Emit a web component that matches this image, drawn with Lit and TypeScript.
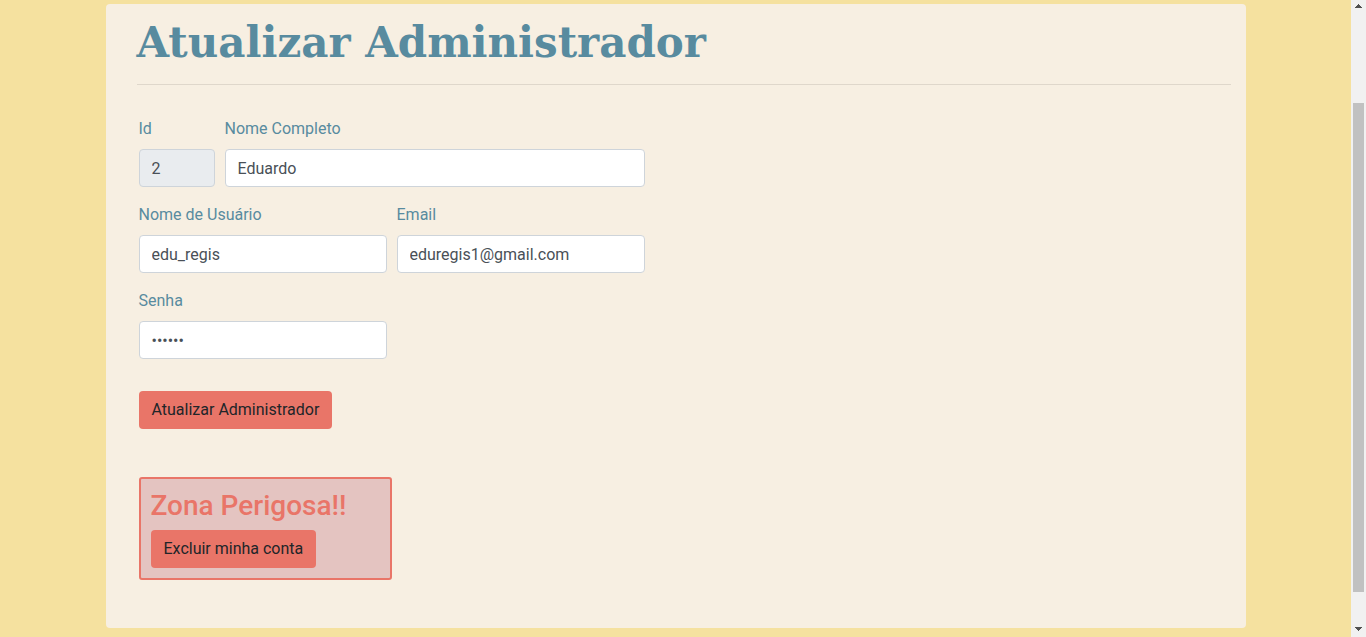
import { LitElement, html, css } from "lit";
import { customElement, state } from "lit/decorators.js";

@customElement("page-scrollbar")
class PageScrollbar extends LitElement {
  static styles = css`
    :host {
      display: flex;
      flex-direction: column;
      align-items: center;
      width: 15px;
      background: #f1f1f1;
    }
    .arrow {
      flex: none;
      display: block;
      width: 15px;
      height: 15px;
      fill: #505050;
    }
    .track {
      flex: 1;
      display: flex;
      flex-direction: column;
      width: 11px;
    }
    .before {
      flex: 88;
    }
    .thumb {
      flex: 489;
      background: #c1c1c1;
    }
    .after {
      flex: 30;
    }
  `;

  render() {
    return html`
      <svg class="arrow" viewBox="0 0 15 15" shape-rendering="crispEdges" aria-hidden="true">
        <path d="M7 4h1v1h1v1h1v1h1v1H4V7h1V6h1V5h1z" />
      </svg>
      <div class="track">
        <div class="before"></div>
        <div class="thumb"></div>
        <div class="after"></div>
      </div>
      <svg class="arrow" viewBox="0 0 15 15" shape-rendering="crispEdges" aria-hidden="true">
        <path d="M4 5h7v1h-1v1H9v1H8v1H7V8H6V7H5V6H4z" />
      </svg>
    `;
  }
}

@customElement("app-root")
class AppRoot extends LitElement {
  static styles = css`
    :host {
      display: flex;
      min-height: 100vh;
      background: #f5e19f;
      color: #212529;
      font: 400 16px/24px Roboto, sans-serif;
    }
    *,
    *::before,
    *::after {
      box-sizing: border-box;
    }
    main {
      flex: 1;
      display: flex;
      justify-content: center;
      align-items: flex-start;
      padding: 4px 0 9px;
    }
    .card {
      flex: 1;
      max-width: 1140px;
      padding: 15px 15px 48px 31px;
      border-radius: 4px;
      background: #f7efe2;
    }
    h1 {
      margin: 0;
      padding-bottom: 17px;
      border-bottom: 1px solid #dfd7cb;
      color: #588b9f;
      font: 700 42px/48px "DejaVu Serif", serif;
    }
    .body {
      padding: 32px 2px 0;
    }
    form {
      max-width: 506px;
    }
    .row {
      display: grid;
      grid-template-columns: 1fr 1fr;
      gap: 10px;
      margin-bottom: 16px;
    }
    .row.identity {
      grid-template-columns: 76px 1fr;
    }
    label {
      display: block;
      margin-bottom: 8px;
      color: #588b9f;
    }
    input {
      display: block;
      width: 100%;
      height: 38px;
      padding: 6px 12px;
      border: 1px solid #ced4da;
      border-radius: 4px;
      background: #fff;
      color: #495057;
      font: inherit;
    }
    input:read-only {
      background: #e9ecef;
    }
    button {
      display: block;
      padding: 7px 13px;
      border: 0;
      border-radius: 4px;
      background: #e97568;
      color: #212529;
      font: inherit;
      cursor: pointer;
    }
    .submit {
      margin-top: 32px;
    }
    .danger {
      max-width: 253px;
      margin-top: 48px;
      padding: 10px;
      border: 2px solid #e97568;
      border-radius: 3px;
      background: #e4c4c1;
    }
    h2 {
      margin: 0 0 8px;
      color: #e97568;
      font-size: 28px;
      font-weight: 500;
      line-height: 33px;
    }
  `;

  @state() private admin = {
    id: "2",
    nome: "Eduardo",
    usuario: "edu_regis",
    email: "eduregis1@gmail.com",
    senha: "123456",
  };

  private field(
    key: "id" | "nome" | "usuario" | "email" | "senha",
    label: string,
    type = "text",
    readonly = false
  ) {
    return html`
      <div>
        <label for=${key}>${label}</label>
        <input
          id=${key}
          name=${key}
          type=${type}
          autocomplete="off"
          .value=${this.admin[key]}
          ?readonly=${readonly}
        />
      </div>
    `;
  }

  render() {
    return html`
      <main>
        <section class="card">
          <h1>Atualizar Administrador</h1>
          <div class="body">
            <form @submit=${(e: Event) => e.preventDefault()}>
              <div class="row identity">
                ${this.field("id", "Id", "text", true)}
                ${this.field("nome", "Nome Completo")}
              </div>
              <div class="row">
                ${this.field("usuario", "Nome de Usuário")}
                ${this.field("email", "Email", "email")}
              </div>
              <div class="row">${this.field("senha", "Senha", "password")}</div>
              <button class="submit" type="submit">Atualizar Administrador</button>
            </form>
            <section class="danger">
              <h2>Zona Perigosa!!</h2>
              <button type="button">Excluir minha conta</button>
            </section>
          </div>
        </section>
      </main>
      <page-scrollbar></page-scrollbar>
    `;
  }
}
